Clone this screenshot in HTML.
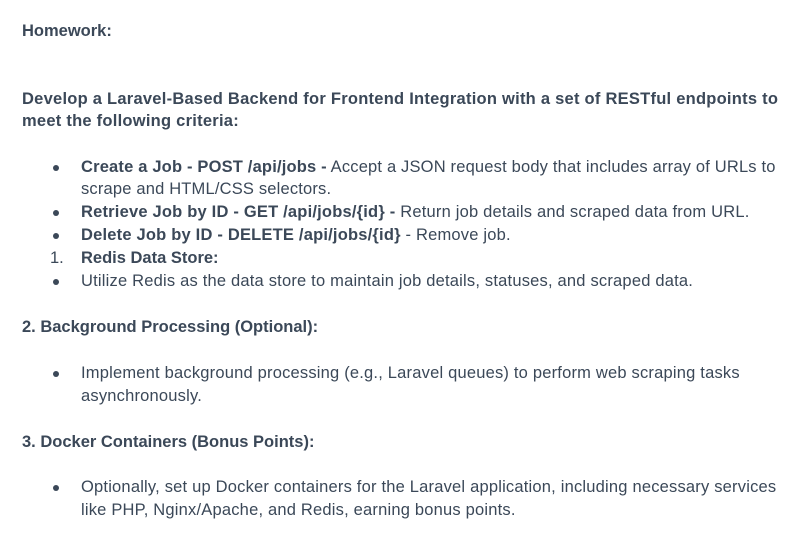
<!DOCTYPE html>
<html><head><style>
body{margin:0;width:807px;height:554px;background:#fff;font-family:"Liberation Sans",sans-serif;color:#3b4858;font-size:16.5px;position:relative;overflow:hidden}
.l{position:absolute;white-space:nowrap;line-height:20px}
b{font-weight:bold}
.d{position:absolute;width:6px;height:6px;border-radius:50%;background:#3b4858}
</style></head><body>
<div class="l" style="left:22px;top:21px"><b>Homework:</b></div>
<div class="l" style="left:22px;top:89px;letter-spacing:0.25px"><b>Develop a Laravel-Based Backend for Frontend Integration with a set of RESTful endpoints to</b></div>
<div class="l" style="left:22px;top:111px;letter-spacing:0.25px"><b>meet the following criteria:</b></div>

<div class="d" style="left:53px;top:165px"></div>
<div class="l" style="left:81px;top:157px;letter-spacing:0.18px"><b>Create a Job - POST /api/jobs -</b> Accept a JSON request body that includes array of URLs to</div>
<div class="l" style="left:81px;top:179px;letter-spacing:0.18px">scrape and HTML/CSS selectors.</div>
<div class="d" style="left:53px;top:210px"></div>
<div class="l" style="left:81px;top:202px;letter-spacing:0.2px"><b>Retrieve Job by ID - GET /api/jobs/{id} -</b> Return job details and scraped data from URL.</div>
<div class="d" style="left:53px;top:233px"></div>
<div class="l" style="left:81px;top:225px;letter-spacing:0.2px"><b>Delete Job by ID - DELETE /api/jobs/{id}</b> - Remove job.</div>
<div class="l" style="left:50px;top:248px">1.</div>
<div class="l" style="left:81px;top:248px"><b>Redis Data Store:</b></div>
<div class="d" style="left:53px;top:279px"></div>
<div class="l" style="left:81px;top:271px;letter-spacing:0.2px">Utilize Redis as the data store to maintain job details, statuses, and scraped data.</div>

<div class="l" style="left:22px;top:317px"><b>2. Background Processing (Optional):</b></div>
<div class="d" style="left:53px;top:371px"></div>
<div class="l" style="left:81px;top:363px;letter-spacing:0.2px">Implement background processing (e.g., Laravel queues) to perform web scraping tasks</div>
<div class="l" style="left:81px;top:386px;letter-spacing:0.2px">asynchronously.</div>

<div class="l" style="left:22px;top:432px"><b>3. Docker Containers (Bonus Points):</b></div>
<div class="d" style="left:53px;top:485px"></div>
<div class="l" style="left:81px;top:477px;letter-spacing:0.2px">Optionally, set up Docker containers for the Laravel application, including necessary services</div>
<div class="l" style="left:81px;top:500px;letter-spacing:0.2px">like PHP, Nginx/Apache, and Redis, earning bonus points.</div>
</body></html>
